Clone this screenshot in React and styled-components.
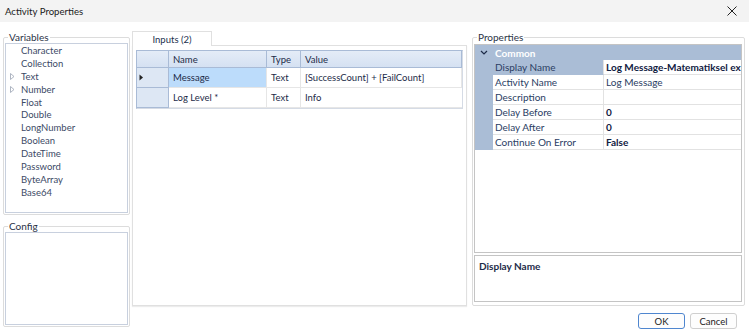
import React from 'react';
import styled, { createGlobalStyle } from 'styled-components';

const GlobalStyle = createGlobalStyle`
  html, body {
    margin: 0;
    padding: 0;
    background: #ffffff;
  }
  body {
    font-family: Lato, "Noto Sans", "Liberation Sans", sans-serif;
    font-size: 10px;
    color: #2a3550;
  }
`;

const variables = [
  { name: 'Character' },
  { name: 'Collection' },
  { name: 'Text', expandable: true },
  { name: 'Number', expandable: true },
  { name: 'Float' },
  { name: 'Double' },
  { name: 'LongNumber' },
  { name: 'Boolean' },
  { name: 'DateTime' },
  { name: 'Password' },
  { name: 'ByteArray' },
  { name: 'Base64' },
];

const inputs = [
  { name: 'Message', type: 'Text', value: '[SuccessCount] + [FailCount]', current: true },
  { name: 'Log Level *', type: 'Text', value: 'Info' },
];

const properties = [
  { name: 'Display Name', value: 'Log Message-Matematiksel ex', bold: true, selected: true },
  { name: 'Activity Name', value: 'Log Message' },
  { name: 'Description', value: '' },
  { name: 'Delay Before', value: '0', bold: true },
  { name: 'Delay After', value: '0', bold: true },
  { name: 'Continue On Error', value: 'False', bold: true },
];

const Window = styled.div`
  width: 749px;
  height: 332px;
  display: flex;
  flex-direction: column;
  background: #ffffff;
  overflow: hidden;
`;

const TitleBar = styled.div`
  height: 22px;
  flex: none;
  display: flex;
  align-items: center;
  justify-content: space-between;
  padding: 0 12px 0 5px;
  background: #f3f3f3;
  font-size: 9.6px;
  color: #1b1b1b;
`;

const CloseButton = styled.span`
  display: flex;
  align-items: center;
  justify-content: center;
  width: 10px;
  height: 10px;
`;

const Body = styled.div`
  display: flex;
  padding: 10px 4px 0 3px;
  gap: 2px;
`;

const LeftColumn = styled.div`
  width: 127px;
  height: 295px;
  flex: none;
  display: flex;
  flex-direction: column;
  gap: 6px;
`;

const GroupBox = styled.fieldset`
  margin: 0;
  padding: 0 ${p => p.$padRight || '1px'} 1px 1px;
  border: 1px solid #dcdcdc;
  border-radius: 2px;
  display: flex;
  flex-direction: column;
  flex: ${p => p.$grow || 'none'};
  height: ${p => p.$height || 'auto'};
  min-height: 0;
  box-sizing: border-box;

  legend {
    padding: 0 1px;
    margin-left: 3px;
    font-size: 10px;
    color: #2b3346;
    line-height: 10px;
  }
`;

const ListBox = styled.div`
  flex: 1;
  margin-top: 1px;
  border: 1px solid #c8d0de;
  background: #ffffff;
  display: flex;
  flex-direction: column;
`;

const ListItem = styled.div`
  height: 12.9px;
  display: flex;
  align-items: center;
  padding-left: 4px;
  font-size: 9.5px;
  color: #3c4a66;
`;

const ExpandArrow = styled.span`
  width: 11px;
  display: inline-flex;
  align-items: center;
`;

const MainArea = styled.div`
  flex: 1;
  display: flex;
  flex-direction: column;
`;

const Panels = styled.div`
  height: 274px;
  display: flex;
  gap: 5px;
`;

const Middle = styled.div`
  width: 335px;
  flex: none;
  display: flex;
  flex-direction: column;
  margin-top: -2px;
`;

const TabStrip = styled.div`
  display: flex;
  height: 15px;
`;

const Tab = styled.div`
  width: 80px;
  border: 1px solid #e0e0e0;
  border-bottom: none;
  background: #ffffff;
  display: flex;
  align-items: center;
  justify-content: center;
  font-size: 9.5px;
  color: #22304d;
  box-sizing: border-box;
  position: relative;
  top: 1px;
`;

const TabPanel = styled.div`
  height: 261px;
  border: 1px solid #e0e0e0;
  box-shadow: 0 1px 1px #ececec;
  padding: 4px 3px;
  box-sizing: border-box;
`;

const Grid = styled.div`
  display: grid;
  grid-template-columns: 32px 98px 34px 1fr;
  border: 1px solid #a9bbd6;
  border-right-color: #d5dbe5;
  border-bottom-color: #d5dbe5;
`;

const HeaderCell = styled.div`
  height: 16px;
  background: linear-gradient(#e4ecf7, #d5e1f2);
  border-right: 1px solid #a9bbd6;
  border-bottom: 1px solid #a9bbd6;
  display: flex;
  align-items: center;
  padding-left: 4px;
  font-size: 9.5px;
  color: #1d2b48;
  &:last-child { border-right: none; }
`;

const RowHeader = styled.div`
  height: 19px;
  background: #dde7f4;
  border-right: 1px solid #a9bbd6;
  border-bottom: 1px solid #a9bbd6;
  display: flex;
  align-items: center;
  padding-left: 2px;
`;

const Cell = styled.div`
  height: 19px;
  display: flex;
  align-items: center;
  padding-left: 4px;
  font-size: 9.5px;
  color: #1d2b48;
  background: ${p => (p.$selected ? '#bcdcfb' : '#ffffff')};
  border-right: 1px solid #e6e6e6;
  border-bottom: 1px solid #e6e6e6;
  white-space: nowrap;
  overflow: hidden;
  &:last-child { border-right: none; }
`;

const Right = styled.div`
  width: 273px;
  flex: none;
  display: flex;
  flex-direction: column;
`;

const PropGrid = styled.div`
  height: 209px;
  border: 1px solid #c4c4c4;
  margin-top: 2px;
  background: #ffffff;
  display: flex;
  flex-direction: column;
  box-sizing: border-box;
  overflow: hidden;
`;

const CategoryRow = styled.div`
  height: 15px;
  flex: none;
  background: #aabdd6;
  display: flex;
  align-items: center;
  color: #ffffff;
  font-weight: 700;
  font-size: 10px;
`;

const CategoryLabel = styled.span`
  padding-left: 2px;
`;

const Gutter = styled.div`
  width: 18px;
  height: 100%;
  flex: none;
  background: #aabdd6;
  display: flex;
  align-items: center;
  justify-content: center;
`;

const PropRow = styled.div`
  height: 15px;
  flex: none;
  display: flex;
  align-items: stretch;
`;

const PropName = styled.div`
  width: 108px;
  flex: none;
  display: flex;
  align-items: center;
  padding-left: 2px;
  font-size: 10px;
  color: #2a3d63;
  background: ${p => (p.$selected ? '#aabdd6' : '#ffffff')};
  border-bottom: 1px solid ${p => (p.$selected ? '#aabdd6' : '#e2e2e2')};
  border-right: 1px solid #e2e2e2;
`;

const PropValue = styled.div`
  flex: 1;
  min-width: 0;
  display: flex;
  align-items: center;
  padding-left: 2px;
  font-size: 10px;
  font-weight: ${p => (p.$bold ? 700 : 400)};
  color: ${p => (p.$bold ? '#10203f' : '#2a3d63')};
  border-bottom: 1px solid #e2e2e2;
  white-space: nowrap;
  overflow: hidden;
`;

const HelpPanel = styled.div`
  height: 47px;
  margin-top: 2px;
  border: 1px solid #c4c4c4;
  padding: 4px 4px;
  box-sizing: border-box;
  font-weight: 700;
  font-size: 10px;
  color: #1d2b48;
`;

const Footer = styled.div`
  display: flex;
  justify-content: flex-end;
  gap: 5px;
  margin-top: 7px;
  padding-right: 8px;
`;

const Button = styled.button`
  width: 47px;
  height: 16px;
  padding: 0;
  font-family: inherit;
  font-size: 9.5px;
  color: #1b1b1b;
  background: #fdfdfd;
  border: 1px solid ${p => (p.$primary ? '#4f86cf' : '#cfcfcf')};
  border-radius: 3px;
`;

const Triangle = ({ filled }) => (
  <svg width="5" height="7" viewBox="0 0 5 7">
    <path d="M0.5 0.5 L4 3.5 L0.5 6.5 Z" fill={filled ? '#222' : 'none'} stroke={filled ? 'none' : '#9aa3b2'} strokeWidth="0.8" />
  </svg>
);

export default function App() {
  return (
    <>
      <GlobalStyle />
      <Window>
        <TitleBar>
          <span>Activity Properties</span>
          <CloseButton>
            <svg width="10" height="10" viewBox="0 0 10 10">
              <path d="M0.5 0.5 L9.5 9.5 M9.5 0.5 L0.5 9.5" stroke="#222" strokeWidth="1" />
            </svg>
          </CloseButton>
        </TitleBar>
        <Body>
          <LeftColumn>
            <GroupBox $height="183px">
              <legend>Variables</legend>
              <ListBox>
                {variables.map(v => (
                  <ListItem key={v.name}>
                    <ExpandArrow>{v.expandable && <Triangle />}</ExpandArrow>
                    {v.name}
                  </ListItem>
                ))}
              </ListBox>
            </GroupBox>
            <GroupBox $grow="1">
              <legend>Config</legend>
              <ListBox />
            </GroupBox>
          </LeftColumn>
          <MainArea>
            <Panels>
              <Middle>
                <TabStrip>
                  <Tab>Inputs (2)</Tab>
                </TabStrip>
                <TabPanel>
                  <Grid>
                    <HeaderCell />
                    <HeaderCell>Name</HeaderCell>
                    <HeaderCell>Type</HeaderCell>
                    <HeaderCell>Value</HeaderCell>
                    {inputs.map(r => (
                      <React.Fragment key={r.name}>
                        <RowHeader>{r.current && <Triangle filled />}</RowHeader>
                        <Cell $selected={r.current}>{r.name}</Cell>
                        <Cell>{r.type}</Cell>
                        <Cell>{r.value}</Cell>
                      </React.Fragment>
                    ))}
                  </Grid>
                </TabPanel>
              </Middle>
              <Right>
                <GroupBox $height="274px" $padRight="2px">
                  <legend>Properties</legend>
                  <PropGrid>
                    <CategoryRow>
                      <Gutter>
                        <svg width="8" height="5" viewBox="0 0 8 5">
                          <path d="M1 1 L4 4 L7 1" fill="none" stroke="#1d2b48" strokeWidth="1.2" />
                        </svg>
                      </Gutter>
                      <CategoryLabel>Common</CategoryLabel>
                    </CategoryRow>
                    {properties.map(p => (
                      <PropRow key={p.name}>
                        <Gutter />
                        <PropName $selected={p.selected}>{p.name}</PropName>
                        <PropValue $bold={p.bold}>{p.value}</PropValue>
                      </PropRow>
                    ))}
                  </PropGrid>
                  <HelpPanel>Display Name</HelpPanel>
                </GroupBox>
              </Right>
            </Panels>
            <Footer>
              <Button $primary>OK</Button>
              <Button>Cancel</Button>
            </Footer>
          </MainArea>
        </Body>
      </Window>
    </>
  );
}
